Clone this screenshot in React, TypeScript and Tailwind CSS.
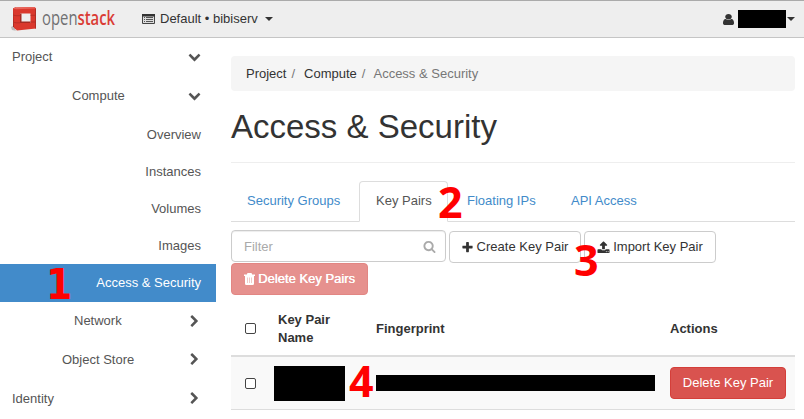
import type { ReactNode } from "react";

const ICONS = {
  down: "M1683 808l-742 741q-19 19-45 19t-45-19l-742-741q-19-19-19-45.5t19-45.5l166-165q19-19 45-19t45 19l531 531 531-531q19-19 45-19t45 19l166 165q19 19 19 45.5t-19 45.5z",
  right: "M1363 877l-742 742q-19 19-45 19t-45-19l-166-166q-19-19-19-45t19-45l531-531-531-531q-19-19-19-45t19-45l166-166q19-19 45-19t45 19l742 742q19 19 19 45t-19 45z",
  plus: "M1600 736v192q0 40-28 68t-68 28h-416v416q0 40-28 68t-68 28h-192q-40 0-68-28t-28-68v-416h-416q-40 0-68-28t-28-68v-192q0-40 28-68t68-28h416v-416q0-40 28-68t68-28h192q40 0 68 28t28 68v416h416q40 0 68 28t28 68z",
  upload: "M1344 1472q0-26-19-45t-45-19-45 19-19 45 19 45 45 19 45-19 19-45zm256 0q0-26-19-45t-45-19-45 19-19 45 19 45 45 19 45-19 19-45zm128-224v320q0 40-28 68t-68 28h-1472q-40 0-68-28t-28-68v-320q0-40 28-68t68-28h427q21 56 70.5 92t110.5 36h256q61 0 110.5-36t70.5-92h427q40 0 68 28t28 68zm-325-648q-17 40-59 40h-256v448q0 26-19 45t-45 19h-256q-26 0-45-19t-19-45v-448h-256q-42 0-59-40-17-39 14-69l448-448q18-19 45-19t45 19l448 448q31 30 14 69z",
  search: "M1216 832q0-185-131.5-316.5t-316.5-131.5-316.5 131.5-131.5 316.5 131.5 316.5 316.5 131.5 316.5-131.5 131.5-316.5zm512 832q0 52-38 90t-90 38q-54 0-90-38l-343-342q-179 124-399 124-143 0-273.5-55.5t-225-150-150-225-55.5-273.5 55.5-273.5 150-225 225-150 273.5-55.5 273.5 55.5 225 150 150 225 55.5 273.5q0 220-124 399l343 343q37 37 37 90z",
};

function Icon({ name, className = "" }: { name: keyof typeof ICONS; className?: string }) {
  return (
    <svg viewBox="0 0 1792 1792" className={`size-[13px] shrink-0 fill-current ${className}`}>
      <path d={ICONS[name]} />
    </svg>
  );
}

function UserIcon() {
  return (
    <svg viewBox="256 128 1280 1528" preserveAspectRatio="none" className="mr-1 h-[11px] w-[11px] shrink-0 fill-current">
      <path d="M1536 1399q0 109-62.5 187t-150.5 78h-854q-88 0-150.5-78t-62.5-187q0-85 8.5-160.5t31.5-152 58.5-131 94-89 134.5-34.5q131 128 313 128t313-128q76 0 134.5 34.5t94 89 58.5 131 31.5 152 8.5 160.5zm-256-887q0 159-112.5 271.5t-271.5 112.5-271.5-112.5-112.5-271.5 112.5-271.5 271.5-112.5 271.5 112.5 112.5 271.5z" />
    </svg>
  );
}

function TrashIcon() {
  return (
    <svg viewBox="0 0 11 12" className="h-3 w-[11px] shrink-0 fill-white">
      <path d="M3.5 0h4l.7 1.5H11V3h-1v7.5q0 1.5-1.3 1.5H2.3Q1 12 1 10.500V3H0V1.500h2.800z" />
      <path d="M3.500 4.500v5.500M5.500 4.500v5.500M7.500 4.500v5.500" stroke="#e6918e" strokeWidth=".8" opacity=".6" />
    </svg>
  );
}

function Caret({ className = "" }: { className?: string }) {
  return (
    <svg viewBox="0 0 8 4" className={`h-1 w-2 shrink-0 fill-[#333] ${className}`}>
      <path d="M0 0h8L4 4z" />
    </svg>
  );
}

function Logo() {
  return (
    <div className="flex w-[110px] items-center">
      <svg viewBox="0 -1 32 32" className="h-8 w-8 shrink-0">
        <path d="M1 23l4-2v5l2 1-5-1z" fill="#bbb" />
        <path d="M3 4.500l3-1v22l-3-3z" fill="#a52a22" />
        <path d="M3 4.500l2-1 19.500-.5L26 4.500v20L7 26.500l-3-3z" fill="#da382d" />
        <path d="M3 4.500l2-1 19.500-.5L26 4.500 6 5.300z" fill="#e8645a" />
        <path d="M10 9.500h10.500v9.500H10z" fill="#eee" />
        <path d="M10 9.500h1.500v8h9v1.500H10z" fill="#a52a22" />
        <path d="M3 11l3 .7h4M20.500 11.300H26M3 18l3 .8h4M20.500 18H26" fill="none" stroke="#b02d24" strokeWidth=".8" />
        <path d="M25.500 4.500v20" stroke="#b02d24" strokeWidth="1" />
      </svg>
      <div className="mb-[5px] flex h-7 origin-left scale-x-[0.725] items-center font-['Open_Sans',sans-serif] text-[20.5px] leading-7 text-[#707173]">
        <span>open</span>
        <span className="font-semibold text-[#da3c35]">stack</span>
      </div>
    </div>
  );
}

function Header() {
  return (
    <header className="flex h-[38px] items-center border-t border-b border-t-[#aaa] border-b-[#c5c5c5] bg-[#eee] pl-2.5 text-[#333]">
      <Logo />
      <div className="ml-[22px] flex items-center">
        <svg viewBox="0 0 13 10" className="mr-[5px] h-2.5 w-[13px]">
          <path d="M.5.5h12v9H.5z" fill="#ddd" stroke="#444" />
          <path d="M0 0h13v2.500H0z" fill="#333" />
          <path d="M2 3.500h1M4 3.500h7M2 5.500h1M4 5.500h7M2 7.500h1M4 7.500h7" stroke="#555" strokeWidth="1" />
        </svg>
        <span>Default • bibiserv</span>
        <Caret className="ml-[7px]" />
      </div>
      <div className="ml-auto flex items-center pr-[9px]">
        <UserIcon />
        <span className="h-[18px] w-12 bg-black" />
        <Caret className="ml-px" />
      </div>
    </header>
  );
}

function Group({ label, pad, open = false, height = "h-[39px]" }: { label: string; pad: string; open?: boolean; height?: string }) {
  return (
    <div className={`flex items-center justify-between pr-[15px] ${height} ${pad}`}>
      <span>{label}</span>
      <Icon name={open ? "down" : "right"} />
    </div>
  );
}

function Sidebar() {
  return (
    <nav className="w-[216px] shrink-0 text-[#555]">
      <Group label="Project" pad="pl-3" open height="h-[37px]" />
      <Group label="Compute" pad="pl-[72px]" open height="h-[41px]" />
      {["Overview", "Instances", "Volumes", "Images"].map((item) => (
        <div key={item} className="flex h-[37px] items-center justify-end pr-[15px]">{item}</div>
      ))}
      <div className="relative flex h-[38px] items-center justify-end bg-[#428bca] pr-[15px] text-white">
        <span className="absolute top-px left-[46px] z-10 font-['DejaVu_Sans_Condensed','DejaVu_Sans',sans-serif] text-[42px] leading-[40px] font-bold text-[#f00] [font-stretch:condensed]">
          1
        </span>
        Access &amp; Security
      </div>
      <Group label="Network" pad="pl-[74px]" height="h-[38px]" />
      <Group label="Object Store" pad="pl-[62px]" />
      <Group label="Identity" pad="pl-3" />
    </nav>
  );
}

function Marker({ n, className }: { n: string; className: string }) {
  return (
    <span className={`absolute z-10 font-['Noto_Sans',sans-serif] text-[43px] leading-[40px] font-bold text-[#f00] ${className}`}>
      {n}
    </span>
  );
}

function Button({ children, className }: { children: ReactNode; className: string }) {
  return (
    <button className={`flex h-8 items-center justify-center rounded border whitespace-nowrap ${className}`}>{children}</button>
  );
}

function Checkbox() {
  return <span className="block size-[11px] rounded-[2px] border border-[#444] bg-white" />;
}

export default function App() {
  return (
    <div className="h-[419px] w-[804px] overflow-hidden bg-white font-['Liberation_Sans',Arial,sans-serif] text-[13px] leading-[18px] text-[#333]">
      <Header />
      <div className="flex">
        <Sidebar />
        <main className="ml-[15px] w-[564px] pt-[18px]">
          <div className="flex h-[35px] items-center rounded bg-[#f5f5f5] pl-[15px]">
            <span>Project</span>
            <span className="mr-[9px] ml-[5px] text-[#777]">/</span>
            <span>Compute</span>
            <span className="mr-2 ml-[5px] text-[#777]">/</span>
            <span className="text-[#777]">Access &amp; Security</span>
          </div>
          <h1 className="h-[72px] border-b border-[#eee] pt-[18px] text-[33px] leading-9">Access &amp; Security</h1>
          <div className="mt-[18px] flex h-[41px] border-b border-[#ddd] text-[#428bca]">
            <span className="w-32 pt-[11px] pl-4">Security Groups</span>
            <div className="relative h-[41px] w-[89px] rounded-t border border-b-white border-[#ddd] bg-white pt-2.5 pl-4 text-[#555]">
              Key Pairs
              <Marker n="2" className="top-0 left-[78px]" />
            </div>
            <span className="w-[104px] pt-[11px] pl-[19px]">Floating IPs</span>
            <span className="pt-[11px] pl-[19px]">API Access</span>
          </div>
          <div className="flex pt-2">
            <div className="flex h-8 w-[215px] items-center justify-between rounded border border-[#ccc] pr-[9px] pl-3 text-[#aaa] shadow-[inset_0_1px_1px_rgba(0,0,0,0.075)]">
              <span className="pt-px">Filter</span>
              <Icon name="search" />
            </div>
            <Button className="mt-px ml-[3px] w-[132px] gap-[3px] border-[#ccc] bg-white pr-px">
              <Icon name="plus" /> Create Key Pair
            </Button>
            <div className="relative mt-px ml-[3px]">
              <Button className="w-[132px] gap-[3px] border-[#ccc] bg-white">
                <Icon name="upload" /> Import Key Pair
              </Button>
              <Marker n="3" className="top-[9px] left-[-10px]" />
            </div>
          </div>
          <Button className="w-[137px] gap-[3px] border-[#e28683] bg-[#e6918e] text-white [text-shadow:0.4px_0_0_#fff]">
            <TrashIcon /> Delete Key Pairs
          </Button>
          <div className="flex h-[62px] items-center border-b-2 border-[#ddd] pt-[7px] pl-3.5 font-bold">
            <Checkbox />
            <span className="ml-[22px] w-[98px]">Key Pair<br />Name</span>
            <span className="w-[294px]">Fingerprint</span>
            <span>Actions</span>
          </div>
          <div className="relative flex h-[53px] items-center border-b border-[#ddd] bg-[#f9f9f9] pl-3.5">
            <Checkbox />
            <span className="ml-[18px] h-[35px] w-[71px] bg-black" />
            <Marker n="4" className="top-1 left-[118px]" />
            <span className="ml-[31px] h-4 w-[279px] bg-black" />
            <Button className="ml-[15px] w-[116px] border-[#d43f3a] bg-[#d9534f] text-white">Delete Key Pair</Button>
          </div>
        </main>
      </div>
    </div>
  );
}
